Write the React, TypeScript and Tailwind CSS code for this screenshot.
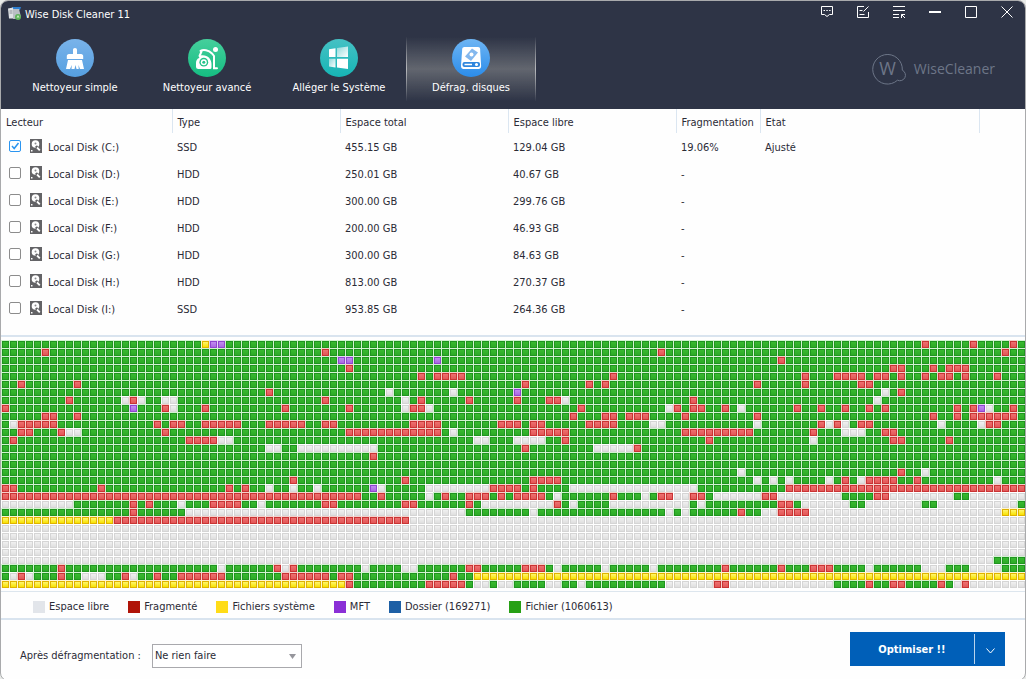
import { useState } from 'react'

type Cluster = 'g' | 'r' | 'f' | 'y' | 'm'

interface Drive {
  letter: string
  type: string
  total: string
  free: string
  fragmentation: string
  state: string
}

const drives: Drive[] = [
  { letter: 'C', type: 'SSD', total: '455.15 GB', free: '129.04 GB', fragmentation: '19.06%', state: 'Ajusté' },
  { letter: 'D', type: 'HDD', total: '250.01 GB', free: '40.67 GB', fragmentation: '-', state: '' },
  { letter: 'E', type: 'HDD', total: '300.00 GB', free: '299.76 GB', fragmentation: '-', state: '' },
  { letter: 'F', type: 'HDD', total: '200.00 GB', free: '46.93 GB', fragmentation: '-', state: '' },
  { letter: 'G', type: 'HDD', total: '300.00 GB', free: '84.63 GB', fragmentation: '-', state: '' },
  { letter: 'H', type: 'HDD', total: '813.00 GB', free: '270.37 GB', fragmentation: '-', state: '' },
  { letter: 'I', type: 'SSD', total: '953.85 GB', free: '264.36 GB', fragmentation: '-', state: '' },
]

const legend = [
  { label: 'Espace libre', color: 'bg-[#e2e5ea]' },
  { label: 'Fragmenté', color: 'bg-[#b01408]' },
  { label: 'Fichiers système', color: 'bg-[#ffdc18]' },
  { label: 'MFT', color: 'bg-[#8a2fd6]' },
  { label: 'Dossier (169271)', color: 'bg-[#1d5fa5]' },
  { label: 'Fichier (1060613)', color: 'bg-[#27a015]' },
]

const COLS = 128

// One line per map row: the base cluster, then the runs that differ from it.
// g = file, r = fragmented, f = free, y = system, m = MFT
const mapRows = [
  'g 25y 26-27m 115r 121r 126r',
  'g 5r 40r 82r 125r',
  'g 42-43m 54m 97r',
  'g 43r 111-112r 116r 118-120r',
  'g 52r 54-57r 76r 100r 104-107r 109-110r 112r 115r 117-118r 120r 124r',
  'g 2r 9r 65r 73r 75r 94r 100r 107-108r',
  'g 33r 48f 56f 64m 110f 112r',
  'g 8r 15f 16r 17f 20-21f 40r 50f 52r 58r 64r 68-69r 70f 86r 109f',
  'g 0r 16m 20r 21f 25r 35r 43r 50f 51-52r 53f 72r 83f 84r 86-87r 90r 92f 99r 102r 105r 108r 110r 119r 121r 122m 123f 126r',
  'g 5-6r 9r 71r 75-76r 78-80r 85r 94r 116r 119r 121-126r',
  'g 1f 2-6r 19r 21-22r 25-29r 33-37r 40-41r 51-54r 62-64r 66-67r 73-76r 81-82f 94f 102r 103f 104r 105f 107-108r 117f 122f 123-124r',
  'g 2-3r 7r 8-9f 20r 43-54r 56f 66-70r 85-93r 101r 105-107f 110-111r',
  'g 1r 23-26r 27-28f 59-60f 64-67f 70r 88r 101f 111-112r 118r',
  'g 33-34f 37-46f 65r 74-78f 79r',
  'g 46r',
  'g',
  'g 92f 112r 115f',
  'g 36r 50r 66-69r 94f 96f 98f 103f 105r 107f 108-111r 114r 124f',
  'g 0-1r 12r 28r 30r 33f 36f 39f 46m 47f 53-60f 61-64r 66r 71-86f 98-127r',
  'f 0-44r 45-46g 47r 48-52g 54g 55r 56-57g 58-60r 61g 62r 63g 64-67r 68g 70-75g 76r 77-79g 81g 82-83r 86-87r 88g 95-96r 105-108g 109-110r 119-120g',
  'f 9-15g 16r 17g 18r 19-21g 23-25g 26-29r 30-31g 33-39g 40-41r 42-49g 50-51r 52-57g 58r 59g 69r 70g 72-75g 86g 88-96g 97-98r 99g 106-107g 115-116g 127g',
  'f 0-15g 16r 17-22g 58-65g 67-82g 84g 86-91g 92r 93-94g 97-100r 125-127y',
  'f 0-13y 14-50r',
  'f',
  'f',
  'f',
  'f',
  'f 124-127g',
  'g 7r 27f 34r 35f 36r 45f 50-51f 58-59r 65-67r 69f 75f 81f 90r 97r 101-103r 108f 115-117f 121-124f',
  'g 1f 2r 3f 7r 10-12f 15r 16f 19r 22-27r 35-40r 42-43r 56r 59-127y',
  'f 0-42y 43r 44-52g 53-57r 58g 61g 64-67g 70-71g 73-82g 89-90r 104-107g 108r 109-110g 111-112r 113-116g 117r 118g 120r',
]

const cells: Record<Cluster, { gap: string; edge: string; top: string; bottom: string }> = {
  g: { gap: '#d2f3d0', edge: '#1f951f', top: '#38b92f', bottom: '#2dab27' },
  r: { gap: '#f6cfca', edge: '#c93434', top: '#ee7070', bottom: '#e25656' },
  f: { gap: '#ffffff', edge: '#d5d5d5', top: '#f0f0f0', bottom: '#dfdfdf' },
  y: { gap: '#fff6cf', edge: '#dfb300', top: '#fff66e', bottom: '#f8e200' },
  m: { gap: '#e6d8f6', edge: '#8f45cf', top: '#c08cf0', bottom: '#aa68e2' },
}

const kinds = Object.keys(cells) as Cluster[]

function parseRow(row: string) {
  const [base, ...runs] = row.split(' ')
  return {
    base: base as Cluster,
    runs: runs.map((run) => {
      const [start, end] = run.slice(0, -1).split('-').map(Number)
      return { start, length: (end ?? start) - start + 1, kind: run.slice(-1) as Cluster }
    }),
  }
}

function ClusterMap() {
  const width = COLS * 8
  const height = mapRows.length * 8 + 1
  return (
    <svg
      viewBox={`0 0 ${width} ${height}`}
      preserveAspectRatio="none"
      className="block h-[249px] w-full"
      shapeRendering="crispEdges"
      role="img"
      aria-label="Carte des clusters"
    >
      <defs>
        {kinds.map((kind) => (
          <g key={kind}>
            <linearGradient id={`shade-${kind}`} x1="0" y1="0" x2="0" y2="1">
              <stop offset="0" stopColor={cells[kind].top} />
              <stop offset="1" stopColor={cells[kind].bottom} />
            </linearGradient>
            <pattern id={`cell-${kind}`} width="8" height="8" patternUnits="userSpaceOnUse">
              <rect width="8" height="8" fill={cells[kind].gap} />
              <rect x="1" y="1" width="7" height="7" fill={cells[kind].edge} />
              <rect x="2" y="2" width="5" height="5" fill={`url(#shade-${kind})`} />
            </pattern>
          </g>
        ))}
      </defs>
      {mapRows.map((row, y) => {
        const { base, runs } = parseRow(row)
        return (
          <g key={y}>
            <rect x="0" y={y * 8} width={width} height="8" fill={`url(#cell-${base})`} />
            {runs.map((run) => (
              <rect
                key={run.start}
                x={run.start * 8}
                y={y * 8}
                width={run.length * 8}
                height="8"
                fill={`url(#cell-${run.kind})`}
              />
            ))}
          </g>
        )
      })}
    </svg>
  )
}

function AppIcon() {
  return (
    <svg width="14" height="14" viewBox="0 0 14 14">
      <path d="M4 0h9l-1 3H5z" fill="#2f7fd0" />
      <path d="M0 1.500l5-1 1 11H1z" fill="#dfe2e5" />
      <path d="M5 2h6l2 8-6 2H5z" fill="#b9bec3" />
      <path d="M1.500 4h3M1.500 6h3" stroke="#8b9097" />
      <circle cx="10" cy="10" r="3" fill="#5fb35a" />
      <path d="M8.500 10.500l1.500-2.500 1.500 2.500z" fill="#c9efc2" />
    </svg>
  )
}

function BroomIcon() {
  return (
    <svg width="38" height="38" viewBox="0 0 38 38">
      <defs>
        <linearGradient id="broom" x1="0" y1="0" x2="0" y2="1">
          <stop offset="0" stopColor="#79b3ea" />
          <stop offset="1" stopColor="#569fe0" />
        </linearGradient>
      </defs>
      <circle cx="19" cy="19" r="19" fill="url(#broom)" />
      <path
        d="M19 9c1.300 0 2 .8 2 2v4h4c1.500 0 2.200 1 2.200 2.200V20H10.800v-2.800C10.800 16 11.500 15 13 15h4v-4c0-1.200.7-2 2-2z"
        fill="#fff"
      />
      <path d="M12 21h14l2 9h-4l-1.500-4 .2 4h-2.200l-1-4-1 4h-3l.3-4-1.800 4h-4z" fill="#fff" />
    </svg>
  )
}

function VacuumIcon() {
  return (
    <svg width="38" height="38" viewBox="0 0 38 38">
      <defs>
        <linearGradient id="vacuum" x1="0" y1="0" x2="0" y2="1">
          <stop offset="0" stopColor="#45cf9c" />
          <stop offset="1" stopColor="#15bd82" />
        </linearGradient>
      </defs>
      <circle cx="19" cy="19" r="19" fill="url(#vacuum)" />
      <path
        d="M12 16.500c7-1.500 11.500 3 11.500 8.500v3.500q0 1.500-1.500 1.500H10.500Q8 30 8 27.500V24c0-2.500 1-4 3-5z"
        fill="#fff"
      />
      <circle cx="15.800" cy="23.200" r="4.400" fill="#25c38b" />
      <circle cx="15.800" cy="23.200" r="3" fill="#fff" />
      <circle cx="15.800" cy="23.200" r="1.500" fill="#25c38b" />
      <path
        d="M11.500 17l2-4.500M12.500 11.800c3-1.600 8-.8 11.500 2.700l2 2.500v12.200h3"
        fill="none"
        stroke="#fff"
        strokeWidth="2"
        strokeLinecap="round"
      />
      <circle cx="27.500" cy="10.500" r="2.500" fill="#fff" />
    </svg>
  )
}

function WindowsIcon() {
  return (
    <svg width="38" height="38" viewBox="0 0 38 38">
      <defs>
        <linearGradient id="windows" x1="0" y1="0" x2="0" y2="1">
          <stop offset="0" stopColor="#45c1c4" />
          <stop offset="1" stopColor="#16b5b5" />
        </linearGradient>
        <linearGradient id="pane" x1="0" y1="0" x2="1" y2="1">
          <stop offset="0" stopColor="#8fdadb" />
          <stop offset="1" stopColor="#fff" />
        </linearGradient>
      </defs>
      <circle cx="19" cy="19" r="19" fill="url(#windows)" />
      <path d="M9 10.200l6.500-1V18H9z" fill="#fff" />
      <path d="M17 8.900L28 7.500V18H17z" fill="url(#pane)" />
      <path d="M9 19.800h6.500v8.700L9 27.500z" fill="url(#pane)" />
      <path d="M17 19.800h11V30l-11-1.400z" fill="#fff" />
    </svg>
  )
}

function DefragIcon() {
  return (
    <svg width="38" height="38" viewBox="0 0 38 38">
      <defs>
        <linearGradient id="defrag" x1="0" y1="0" x2="0" y2="1">
          <stop offset="0" stopColor="#6db5f4" />
          <stop offset="1" stopColor="#2b8cea" />
        </linearGradient>
      </defs>
      <circle cx="19" cy="19" r="19" fill="url(#defrag)" />
      <path d="M12.500 8h13.500c1.400 0 2 .8 2.100 2l1 17c0 2-1 3-2.600 3h-15C10 30 9 29 9 27l1.200-17c.1-1.200.9-2 2.300-2z" fill="#fff" />
      <path d="M20 9.500l6 4-7 8.500-6-4.500z" fill="#84b8ee" />
      <circle cx="19.500" cy="15.500" r="2" fill="#fff" />
      <rect x="10.500" y="23" width="17.500" height="5" rx="2" fill="#2f86dd" />
      <path d="M12.500 25.500h7.500" stroke="#fff" strokeWidth="1.500" />
      <circle cx="24.500" cy="25.500" r="1.500" fill="#fff" />
    </svg>
  )
}

function DiskIcon() {
  return (
    <svg width="12" height="14" viewBox="0 0 12 14" className="shrink-0">
      <rect width="12" height="14" fill="#636366" />
      <circle cx="5.500" cy="5" r="3.800" fill="#fff" />
      <circle cx="5.500" cy="4.500" r="1" fill="#8b8b8e" />
      <path d="M6 7l4 5" stroke="#636366" strokeWidth="2.500" />
      <path d="M7 8.500l2.800 2.800" stroke="#fff" strokeWidth="1.800" />
      <path d="M1 11h1.500v1.500H1z" fill="#fff" />
    </svg>
  )
}

const tools = [
  { label: 'Nettoyeur simple', icon: <BroomIcon /> },
  { label: 'Nettoyeur avancé', icon: <VacuumIcon /> },
  { label: 'Alléger le Système', icon: <WindowsIcon /> },
  { label: 'Défrag. disques', icon: <DefragIcon /> },
]

const windowButtons = [
  { label: 'Commentaires', d: 'M1.500 1.500h11v8h-3l-2.500 2-2.500-2h-3zM3.500 5.500h1.500M6.300 5.500h1.500M9.100 5.500h1.500' },
  { label: 'Enregistrer', d: 'M8 1.500H1.500v11h11V7M3.500 5.500h3M3.500 9.500h5M12.500 1.500l-5 5' },
  { label: 'Menu', d: 'M1 1.500h12M1 5.500h12M1 9.500h6M1 12.500h6M9.500 13V9.500H13M9.500 9.500l3.500 3.500' },
  { label: 'Réduire', d: 'M1 6.500h12M1 7.500h12' },
  { label: 'Agrandir', d: 'M1.500 1.500h11v11h-11z' },
  { label: 'Fermer', d: 'M1.500 1.500l11 11M12.500 1.500l-11 11' },
]

function WiseLogo() {
  return (
    <div className="flex items-center gap-1 text-[#6d7688]">
      <svg width="38" height="32" viewBox="0 0 38 32" fill="none" stroke="currentColor">
        <path d="M25.500 27.200A14.800 14.800 0 1 1 30.300 17.200A5.500 5.500 0 1 1 25.500 27.200" />
        <text
          x="15.500"
          y="22"
          textAnchor="middle"
          stroke="none"
          fill="currentColor"
          className="font-['Open_Sans','Noto_Sans',sans-serif] text-lg"
        >
          W
        </text>
      </svg>
      <span className="font-['Open_Sans','Noto_Sans',sans-serif] text-sm">WiseCleaner</span>
    </div>
  )
}

export default function App() {
  const [active, setActive] = useState(3)
  const [checked, setChecked] = useState<string[]>(['C'])

  const toggle = (letter: string) =>
    setChecked((prev) => (prev.includes(letter) ? prev.filter((l) => l !== letter) : [...prev, letter]))

  return (
    <div className="min-h-screen bg-[#e9ebe9] font-['DejaVu_Sans_Condensed','DejaVu_Sans',sans-serif] text-[11px] text-[#2b2b36]">
      <div className="flex min-h-screen flex-col overflow-hidden rounded-lg border border-[#a9aaac] bg-[#fefefe]">
        <header className="bg-[#2e3446] pb-2 text-white">
          {/* Title bar */}
          <div className="flex h-9 items-start justify-between pl-[7px]">
            <div className="flex h-[26px] items-center gap-[3px]">
              <AppIcon />
              <h1 className="pt-[2px]">Wise Disk Cleaner 11</h1>
            </div>
            <div className="flex">
              {windowButtons.map((button) => (
                <button key={button.label} type="button" aria-label={button.label} className="flex h-[22px] w-9 items-center justify-center">
                  <svg width="14" height="14" viewBox="0 0 14 14" fill="none" stroke="currentColor">
                    <path d={button.d} />
                  </svg>
                </button>
              ))}
            </div>
          </div>

          {/* Tools */}
          <div className="flex items-center justify-between pr-[30px] pl-[9px]">
            <nav className="flex gap-[2px]">
              {tools.map((tool, i) => (
                <button
                  key={tool.label}
                  type="button"
                  onClick={() => setActive(i)}
                  className={`flex h-16 w-[130px] flex-col items-center gap-[3px] border-x pt-[2px] ${
                    i === active
                      ? 'bg-linear-to-b from-transparent via-[#62666f] to-transparent [border-image:linear-gradient(to_bottom,transparent,#b5b7bb,transparent)_1]'
                      : 'border-transparent'
                  }`}
                >
                  {tool.icon}
                  <span className="leading-4">{tool.label}</span>
                </button>
              ))}
            </nav>
            <WiseLogo />
          </div>
        </header>

        <main className="flex flex-1 flex-col">
          {/* Drives */}
          <div className="border-b-2 border-[#d9e4ef] pb-[13px]">
            <table className="w-full table-fixed text-left">
              <colgroup>
                <col className="w-[171px]" />
                <col className="w-[168px]" />
                <col className="w-[168px]" />
                <col className="w-[168px]" />
                <col className="w-[84px]" />
                <col className="w-[219px]" />
                <col />
              </colgroup>
              <thead>
                <tr className="h-6">
                  {['Lecteur', 'Type', 'Espace total', 'Espace libre', 'Fragmentation', 'Etat'].map((title) => (
                    <th key={title} scope="col" className="border-r border-[#dbe6f1] pt-1 pl-[5px] font-normal whitespace-nowrap">
                      {title}
                    </th>
                  ))}
                  <td />
                </tr>
              </thead>
              <tbody>
                {drives.map((drive) => (
                  <tr key={drive.letter} className="h-[27px] leading-[18px]">
                    <td className="pt-[2px] pl-2">
                      <label className="flex items-center">
                        <span className="mb-1 grid">
                          <input
                            type="checkbox"
                            checked={checked.includes(drive.letter)}
                            onChange={() => toggle(drive.letter)}
                            className="peer col-start-1 row-start-1 size-3 appearance-none rounded-[2px] border border-[#8c8c8c] bg-white checked:border-[#2b95f0]"
                          />
                          <svg
                            viewBox="0 0 12 12"
                            className="pointer-events-none invisible col-start-1 row-start-1 size-3 peer-checked:visible"
                            fill="none"
                            stroke="#2b95f0"
                            strokeWidth="1.500"
                          >
                            <path d="M3 6l2.200 2.500L9.500 3" />
                          </svg>
                        </span>
                        <span className="mr-[6px] mb-1 ml-[9px]">
                          <DiskIcon />
                        </span>
                        Local Disk ({drive.letter}:)
                      </label>
                    </td>
                    <td className="pt-[2px] pl-[5px]">{drive.type}</td>
                    <td className="pt-[2px] pl-[5px]">{drive.total}</td>
                    <td className="pt-[2px] pl-[5px]">{drive.free}</td>
                    <td className="pt-[2px] pl-[5px]">{drive.fragmentation}</td>
                    <td className="pt-[2px] pl-[5px]">{drive.state}</td>
                    <td />
                  </tr>
                ))}
              </tbody>
            </table>
          </div>

          <div className="pt-[3px] pb-[2px]">
            <ClusterMap />
          </div>

          {/* Legend */}
          <ul className="flex items-center gap-[19px] border-t border-b-2 border-t-[#dde6ee] border-b-[#d9e4ef] pt-[7px] pb-[3px] pl-8">
            {legend.map((item) => (
              <li key={item.label} className="flex items-center gap-1 leading-4">
                <span className={`size-3 ${item.color}`} />
                {item.label}
              </li>
            ))}
          </ul>
        </main>

        <footer className="flex items-start justify-between py-3 pr-5 pl-[19px]">
          <div className="flex items-center gap-[11px] pt-3">
            <label htmlFor="after">Après défragmentation :</label>
            <div className="grid w-[150px] items-center">
              <select
                id="after"
                className="col-start-1 row-start-1 h-6 w-full appearance-none border border-[#a9a9ad] bg-white px-[2px]"
              >
                <option>Ne rien faire</option>
                <option>Éteindre</option>
                <option>Redémarrer</option>
                <option>Mettre en veille</option>
              </select>
              <svg width="7" height="5" viewBox="0 0 7 5" className="pointer-events-none col-start-1 row-start-1 mr-[6px] justify-self-end">
                <path d="M0 0h7L3.500 5z" fill="#96969c" />
              </svg>
            </div>
          </div>
          <div className="flex h-[34px] bg-[#005fb8] text-white">
            <button type="button" className="w-[124px] pt-[2px] font-bold">
              Optimiser !!
            </button>
            <button type="button" aria-label="Options" className="my-[2px] flex w-[31px] items-center justify-center border-l border-[#b9d3ec]">
              <svg width="9" height="6" viewBox="0 0 9 6" fill="none" stroke="currentColor" className="mt-1">
                <path d="M.5.500l4 4.500 4-4.500" />
              </svg>
            </button>
          </div>
        </footer>
      </div>
    </div>
  )
}
